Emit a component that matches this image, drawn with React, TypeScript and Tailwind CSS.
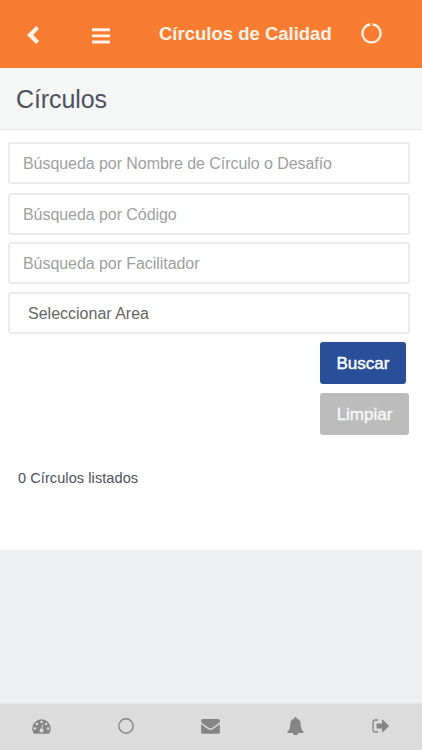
import { useState } from 'react'
import type { ReactNode } from 'react'

const FILTERS = [
  { id: 'name', placeholder: 'Búsqueda por Nombre de Círculo o Desafío', className: 'h-[42px] tracking-[-0.06px]' },
  { id: 'code', placeholder: 'Búsqueda por Código', className: 'mt-[9px] h-[42px] tracking-[-0.06px]' },
  { id: 'facilitator', placeholder: 'Búsqueda por Facilitador', className: 'mt-[7px] h-[42px] tracking-[-0.06px]' },
]

function ChevronLeftIcon() {
  return (
    <svg className="h-[18px] w-3" viewBox="0 0 12 18" fill="currentColor">
      <path d="M9.2 0 12 2.8 6.300 9l5.700 6.100L9.200 18 0 9z" />
    </svg>
  )
}

function MenuIcon() {
  return (
    <svg className="h-4 w-[18px]" viewBox="0 0 18 16" fill="currentColor">
      <path d="M0 .3h18v2.900H0zM0 6.400h18v2.900H0zM0 12.500h18v2.900H0z" />
    </svg>
  )
}

function RefreshIcon() {
  return (
    <svg className="size-[21px]" viewBox="0 0 21 21" fill="none" stroke="currentColor" strokeWidth="2.3">
      <path d="M9.400 1.500a9 9 0 1 0 2.200 0" />
    </svg>
  )
}

function DashboardIcon() {
  return (
    <svg className="h-[15px] w-[19px]" viewBox="0 0 19 15">
      <path d="M9.5.3A9.2 9.2 0 0 0 .3 9.5c0 1.8.5 3.4 1.4 4.8.2.3.4.4.7.4h14.2c.3 0 .5-.1.7-.4.9-1.4 1.4-3 1.4-4.800A9.200 9.200 0 0 0 9.500.3z" fill="currentColor" />
      <g fill="#dcdcdc">
        <circle cx="2.900" cy="9.600" r="1.300" />
        <circle cx="4.900" cy="5" r="1.300" />
        <circle cx="9.500" cy="3" r="1.300" />
        <circle cx="14.100" cy="5" r="1.300" />
        <circle cx="16.100" cy="9.600" r="1.300" />
        <path d="M10.500 5.500l.9.2-1 4a2 2 0 1 1-1-.2z" />
      </g>
    </svg>
  )
}

function CircleIcon() {
  return (
    <svg className="size-4" viewBox="0 0 16 16" fill="none" stroke="currentColor" strokeWidth="1.4">
      <circle cx="8" cy="8" r="7.200" />
    </svg>
  )
}

function MailIcon() {
  return (
    <svg className="h-[15px] w-[19px]" viewBox="0 0 19 15" fill="currentColor">
      <path d="M2 0h15c1.100 0 1.900.8 1.900 1.700 0 1.200-.9 2.300-1.900 3-1.800 1.300-3.600 2.500-5.400 3.800-.7.500-1.500 1-2.100 1s-1.400-.5-2.100-1C5.600 7.200 3.800 6 2 4.700 1.200 4.100.1 3 .1 2 .1.900.8 0 2 0z" />
      <path d="M.1 5.100c.4.400.8.700 1.200 1 1.900 1.300 3.800 2.600 5.600 3.900.8.600 1.700 1.100 2.600 1.100s1.800-.5 2.600-1.100c1.800-1.300 3.700-2.600 5.600-3.900.4-.3.800-.6 1.200-1v7.900c0 1-.8 1.800-1.800 1.800H1.900C.9 14.800.1 14 .1 13z" />
    </svg>
  )
}

function BellIcon() {
  return (
    <svg className="h-[18px] w-[17px]" viewBox="0 0 17 18" fill="currentColor">
      <path d="M8.500 0c.7 0 1.200.5 1.200 1.200l-.1.400c2.500.5 4 2.500 4 5.100 0 4.200 1 6.300 3.200 8.100 0 .7-.5 1.200-1.200 1.200h-4.600a2.500 2.500 0 0 1-5 0H1.400c-.7 0-1.200-.5-1.200-1.200 2.200-1.800 3.200-3.900 3.200-8.100 0-2.600 1.500-4.600 4-5.100l-.1-.4C7.300.5 7.800 0 8.500 0z" />
    </svg>
  )
}

function SignOutIcon() {
  return (
    <svg className="h-[14px] w-[17px]" viewBox="0 0 17 14">
      <path d="M6 1H3.300A2.300 2.300 0 0 0 1 3.300v7.400A2.300 2.300 0 0 0 3.300 13H6" fill="none" stroke="currentColor" strokeWidth="1.300" />
      <path d="M10 1.300c0-.6.6-.8 1-.4l5.700 5.600c.3.300.3.700 0 1L11 13.100c-.4.400-1 .2-1-.4V9.600H5.200c-.4 0-.7-.3-.7-.7V5.100c0-.4.300-.7.700-.7H10z" fill="currentColor" />
    </svg>
  )
}

function TabButton({ label, children }: { label: string; children: ReactNode }) {
  return (
    <button aria-label={label} className="flex h-full w-[84.7px] shrink-0 items-center justify-center pr-[2px] pb-[2px]">
      {children}
    </button>
  )
}

export default function App() {
  const [values, setValues] = useState<Record<string, string>>({})

  return (
    <div className="flex h-[750px] w-full flex-col overflow-hidden bg-[#eff0f2] font-['Liberation_Sans',Arial,sans-serif] text-[#4d5160]">
      <header className="flex h-[68px] shrink-0 items-center bg-[#f97d31] pl-[27px] text-[#fff3e9]">
        <button aria-label="Volver" className="mt-[1px] w-[65px]">
          <ChevronLeftIcon />
        </button>
        <button aria-label="Menú" className="mt-[3px] w-[67px]">
          <MenuIcon />
        </button>
        <h1 className="w-[202px] text-[18.5px] font-bold leading-6 whitespace-nowrap">Círculos de Calidad</h1>
        <button aria-label="Actualizar" className="-mt-[2px]">
          <RefreshIcon />
        </button>
      </header>

      <div className="flex h-[62px] shrink-0 items-center border-b border-[#e9eaed] bg-[#f5f7f7] pl-4">
        <h2 className="text-[25px] leading-8 tracking-[-0.1px]">Círculos</h2>
      </div>

      <main className="h-[420px] shrink-0 bg-white pt-3 pr-3 pl-2">
        <div className="flex flex-col">
          {FILTERS.map((filter) => (
            <input
              key={filter.id}
              className={`${filter.className} w-full rounded-[3px] border-2 border-[#ebebeb] bg-white px-[13px] pt-[2px] text-[16px] text-[#555] outline-none placeholder:text-[#a0a0a0]`}
              placeholder={filter.placeholder}
              value={values[filter.id] ?? ''}
              onChange={(e) => setValues({ ...values, [filter.id]: e.target.value })}
            />
          ))}
          <select className="mt-[8px] h-[42px] w-full appearance-none rounded-[3px] border-2 border-[#ebebeb] bg-white px-[18px] pt-[2px] text-[16px] text-[#666]">
            <option>Seleccionar Area</option>
          </select>
        </div>

        <div className="ml-[312px] flex flex-col items-start gap-[9px] pt-[8px]">
          <button className="h-[42px] w-[86px] rounded-[3px] bg-[#284f98] pt-[2px] text-[17px] text-white [-webkit-text-stroke:0.4px_white]">
            Buscar
          </button>
          <button className="h-[42px] w-[89px] rounded-[3px] bg-[#bbbcbb] pt-[2px] text-[17px] text-[#f8f8f8] [-webkit-text-stroke:0.4px_#f8f8f8]">
            Limpiar
          </button>
        </div>

        <p className="mt-[33px] pl-[10px] text-[14.5px] leading-5 tracking-[0.09px]">0 Círculos listados</p>
      </main>

      <nav className="mt-auto flex h-[47px] shrink-0 items-center border-t border-[#e4e4e5] bg-[#dcdcdc] text-[#858585]">
        <TabButton label="Panel">
          <DashboardIcon />
        </TabButton>
        <TabButton label="Círculos">
          <CircleIcon />
        </TabButton>
        <TabButton label="Mensajes">
          <MailIcon />
        </TabButton>
        <TabButton label="Notificaciones">
          <BellIcon />
        </TabButton>
        <TabButton label="Salir">
          <SignOutIcon />
        </TabButton>
      </nav>
    </div>
  )
}
